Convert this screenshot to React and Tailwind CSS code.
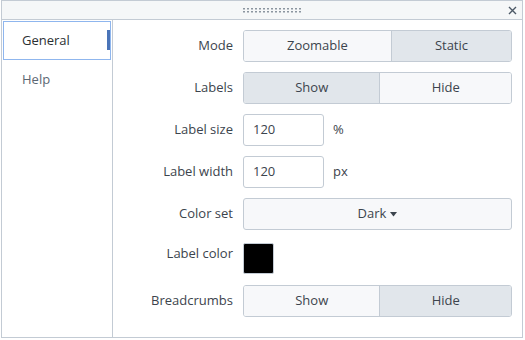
import React from "react";

function Seg({ options, selected }) {
  return (
    <div className="flex h-[32px] w-[269px] rounded-[3px] border border-[#c3cbd4] overflow-hidden">
      {options.map((o, i) => (
        <div
          key={o}
          className={
            "flex-auto flex items-center justify-center text-[13px] text-[#3c444d] " +
            (i === selected ? "bg-[#e1e6eb]" : "bg-[#f7f8fa]") +
            (i > 0 ? " border-l border-[#c3cbd4]" : "")
          }
        >
          {o}
        </div>
      ))}
    </div>
  );
}

function Row({ label, children, h = "h-[32px]", align = "items-center" }) {
  return (
    <div className={"flex " + align + " " + h}>
      <div className={"w-[130px] pr-[10px] text-right text-[13px] text-[#3c444d] shrink-0" + (align === "items-start" ? " mt-[4px]" : "")}>{label}</div>
      {children}
    </div>
  );
}

function NumInput({ value, unit }) {
  return (
    <div className="flex items-center">
      <div className="w-[81px] h-[32px] border border-[#c3cbd4] rounded-[3px] bg-white flex items-center pl-[9px] text-[13px] text-[#3c444d]">
        {value}
      </div>
      <span className="ml-[9px] text-[13px] text-[#3c444d]">{unit}</span>
    </div>
  );
}

export default function App() {
  const dots = [];
  for (let r = 0; r < 2; r++)
    for (let c = 0; c < 15; c++)
      dots.push(<rect key={r + "-" + c} x={c * 4} y={r * 3} width="2" height="1.5" fill="#8c96a0" />);
  return (
    <div className="w-[525px] h-[340px] bg-white" style={{ fontFamily: '"Open Sans", "Liberation Sans", sans-serif' }}>
      <div className="ml-[1px] w-[522px] h-[338px] border border-[#c3cbd4] flex flex-col">
        <div className="h-[19px] shrink-0 bg-[#f5f7f8] border-b border-[#c3cbd4] relative flex items-center justify-center">
          <svg width="60" height="5" viewBox="0 0 60 5" className="ml-[22px]">{dots}</svg>
          <svg width="9" height="9" viewBox="0 0 9 9" className="absolute right-[5px] top-[5px]">
            <path d="M1 1 L8 8 M8 1 L1 8" stroke="#4c5866" strokeWidth="1.4" />
          </svg>
        </div>
        <div className="flex flex-1">
          <div className="w-[111px] shrink-0 border-r border-[#c3cbd4] pt-[1px] px-[1px]">
            <div className="relative h-[39px] border border-[#8fb6ee] flex items-center pl-[18px] text-[13px] font-medium text-[#2b3033]">
              General
              <div className="absolute right-[0px] top-[8px] w-[3px] h-[20px] bg-[#4a74b8]" />
            </div>
            <div className="h-[39px] flex items-center pl-[19px] text-[13px] text-[#5c6773]">Help</div>
          </div>
          <div className="flex-1 pt-[10px] flex flex-col gap-[10px]">
            <Row label="Mode"><Seg options={["Zoomable", "Static"]} selected={1} /></Row>
            <Row label="Labels"><Seg options={["Show", "Hide"]} selected={0} /></Row>
            <Row label="Label size"><NumInput value="120" unit="%" /></Row>
            <Row label="Label width"><NumInput value="120" unit="px" /></Row>
            <Row label="Color set">
              <div className="w-[269px] h-[32px] border border-[#c3cbd4] rounded-[3px] bg-[#f7f8fa] flex items-center justify-center text-[13px] text-[#3c444d]">
                Dark
                <svg width="7" height="5" viewBox="0 0 7 5" className="ml-[4px]">
                  <path d="M0 0 L7 0 L3.5 4.5 Z" fill="#3c444d" />
                </svg>
              </div>
            </Row>
            <Row label="Label color" h="h-[35px]" align="items-start">
              <div className="w-[31px] h-[31px] bg-black border border-[#c3cbd4] rounded-[2px] mt-[3px]" />
            </Row>
            <Row label="Breadcrumbs"><Seg options={["Show", "Hide"]} selected={1} /></Row>
          </div>
        </div>
      </div>
    </div>
  );
}
